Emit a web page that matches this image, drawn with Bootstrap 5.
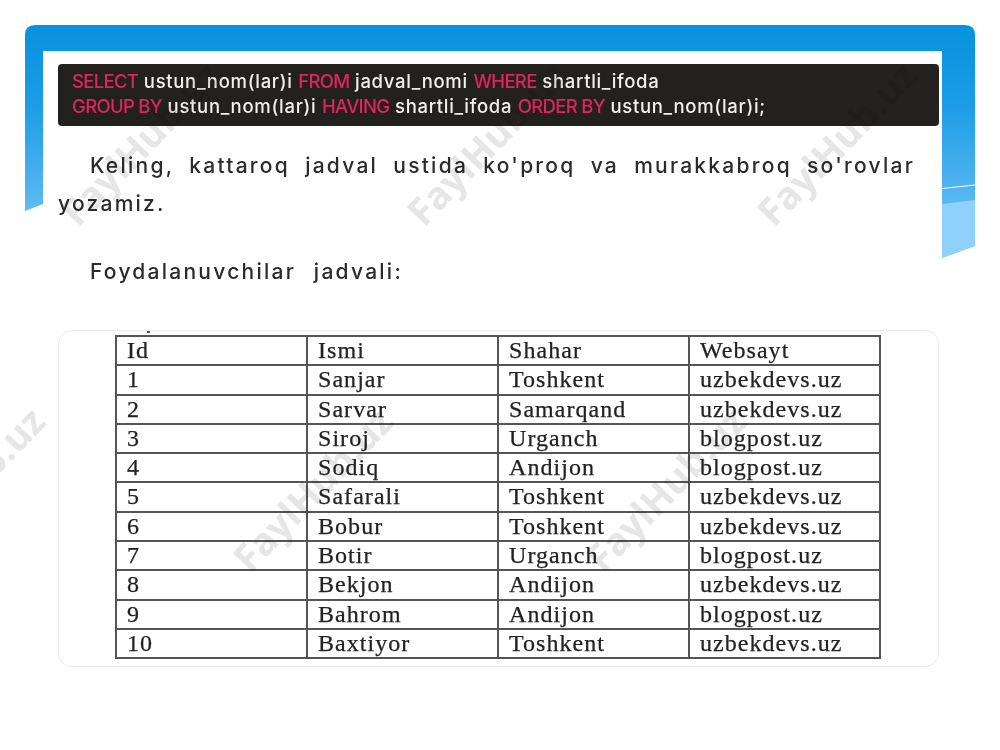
<!DOCTYPE html>
<html lang="uz">
<head>
<meta charset="utf-8">
<title>SQL HAVING</title>
<link href="https://cdn.jsdelivr.net/npm/bootstrap@5.3.0/dist/css/bootstrap.min.css" rel="stylesheet">
<style>
html,body{margin:0;background:#fff;}
.sheet{position:relative;width:1000px;height:750px;overflow:hidden;background:#fff;padding:64px 61px 0 58px;font-family:"Inter","Open Sans",sans-serif;}
.frame-art{position:absolute;left:0;top:0;width:1000px;height:750px;}
.content-flow{position:relative;}
.code-box{background:#222120;color:#f1f0ec;border-radius:4px;height:62px;padding:5px 14px;font-size:18.500px;line-height:25px;font-family:"Inter",sans-serif;font-weight:500;letter-spacing:.7px;white-space:nowrap;filter:blur(.25px);}
.kw{color:#e0245e;letter-spacing:-.7px;}
.prose{color:#2b2b2b;font-size:21px;font-weight:500;letter-spacing:2.25px;margin:0;font-family:"Inter",sans-serif;filter:blur(.25px);}
.prose-a{margin-top:21px;line-height:38px;width:857px;text-align:justify;text-indent:32px;}
.prose-b{margin-top:30px;line-height:38px;text-indent:32px;word-spacing:10px;}
.table-card{position:relative;margin-top:39px;height:337px;border:1px solid #e7eaec;border-radius:14px;background:#fff;padding:4px 56px 0;}
.table-card::before{content:"";position:absolute;left:88px;top:0;width:3px;height:2px;background:#555;}
.scan-table{width:766px;table-layout:fixed;border-collapse:collapse;margin:0;font-family:"Liberation Serif",serif;font-size:24px;letter-spacing:1.05px;color:#222;--bs-table-color:#222;--bs-table-bg:transparent;--bs-border-color:#555;filter:blur(.35px);}
.scan-table td{padding:1px 0 1px 10px;line-height:25.300px;vertical-align:middle;border:2px solid #555;white-space:nowrap;overflow:hidden;-webkit-text-stroke:.25px #222;}
.wm{position:absolute;font-family:"Open Sans",sans-serif;font-weight:700;font-size:38px;line-height:1;color:#e6e6e6;transform:rotate(-46deg);transform-origin:left bottom;mix-blend-mode:multiply;white-space:nowrap;}
.wm-a{left:81px;top:193px}.wm-b{left:427px;top:193px}.wm-c{left:777px;top:193px}
.wm-d{left:253px;top:539px}.wm-e{left:606px;top:539px}.wm-f{left:-95px;top:539px}
</style>
</head>
<body>
<div class="sheet">
  <svg class="frame-art" viewBox="0 0 1000 750" aria-hidden="true">
    <defs>
      <linearGradient id="lg" x1="0" y1="25" x2="0" y2="258" gradientUnits="userSpaceOnUse">
        <stop offset="0" stop-color="#0791e0"/><stop offset=".35" stop-color="#1d9de6"/><stop offset=".75" stop-color="#58b7f1"/><stop offset="1" stop-color="#90d2fb"/>
      </linearGradient>
    </defs>
    <path fill="url(#lg)" fill-rule="evenodd" d="M25 211V35Q25 25 35 25H965Q975 25 975 35V246L942 258V51H43V204Z"/>
    <path d="M942 188.500L975 185" stroke="#fff" stroke-width="1" fill="none"/>
    <path d="M942 204L975 200V246L942 258Z" fill="#8fd1fb"/>
  </svg>
  <div class="content-flow">
    <div class="code-box"><span class="kw">SELECT</span> ustun_nom(lar)i <span class="kw">FROM</span> jadval_nomi <span class="kw">WHERE</span> shartli_ifoda<br><span class="kw">GROUP BY</span> ustun_nom(lar)i <span class="kw">HAVING</span> shartli_ifoda <span class="kw">ORDER BY</span> ustun_nom(lar)i;</div>
    <p class="prose prose-a">Keling, kattaroq jadval ustida ko'proq va murakkabroq so'rovlar yozamiz.</p>
    <p class="prose prose-b">Foydalanuvchilar jadvali:</p>
    <div class="table-card">
      <table class="table table-bordered scan-table">
        <tbody>
          <tr><td>Id</td><td>Ismi</td><td>Shahar</td><td>Websayt</td></tr>
          <tr><td>1</td><td>Sanjar</td><td>Toshkent</td><td>uzbekdevs.uz</td></tr>
          <tr><td>2</td><td>Sarvar</td><td>Samarqand</td><td>uzbekdevs.uz</td></tr>
          <tr><td>3</td><td>Siroj</td><td>Urganch</td><td>blogpost.uz</td></tr>
          <tr><td>4</td><td>Sodiq</td><td>Andijon</td><td>blogpost.uz</td></tr>
          <tr><td>5</td><td>Safarali</td><td>Toshkent</td><td>uzbekdevs.uz</td></tr>
          <tr><td>6</td><td>Bobur</td><td>Toshkent</td><td>uzbekdevs.uz</td></tr>
          <tr><td>7</td><td>Botir</td><td>Urganch</td><td>blogpost.uz</td></tr>
          <tr><td>8</td><td>Bekjon</td><td>Andijon</td><td>uzbekdevs.uz</td></tr>
          <tr><td>9</td><td>Bahrom</td><td>Andijon</td><td>blogpost.uz</td></tr>
          <tr><td>10</td><td>Baxtiyor</td><td>Toshkent</td><td>uzbekdevs.uz</td></tr>
        </tbody>
      </table>
    </div>
  </div>
  <span class="wm wm-a">FaylHub.uz</span><span class="wm wm-b">FaylHub.uz</span><span class="wm wm-c">FaylHub.uz</span>
  <span class="wm wm-d">FaylHub.uz</span><span class="wm wm-e">FaylHub.uz</span><span class="wm wm-f">FaylHub.uz</span>
</div>
<script src="https://cdn.jsdelivr.net/npm/bootstrap@5.3.0/dist/js/bootstrap.bundle.min.js"></script>
</body>
</html>
